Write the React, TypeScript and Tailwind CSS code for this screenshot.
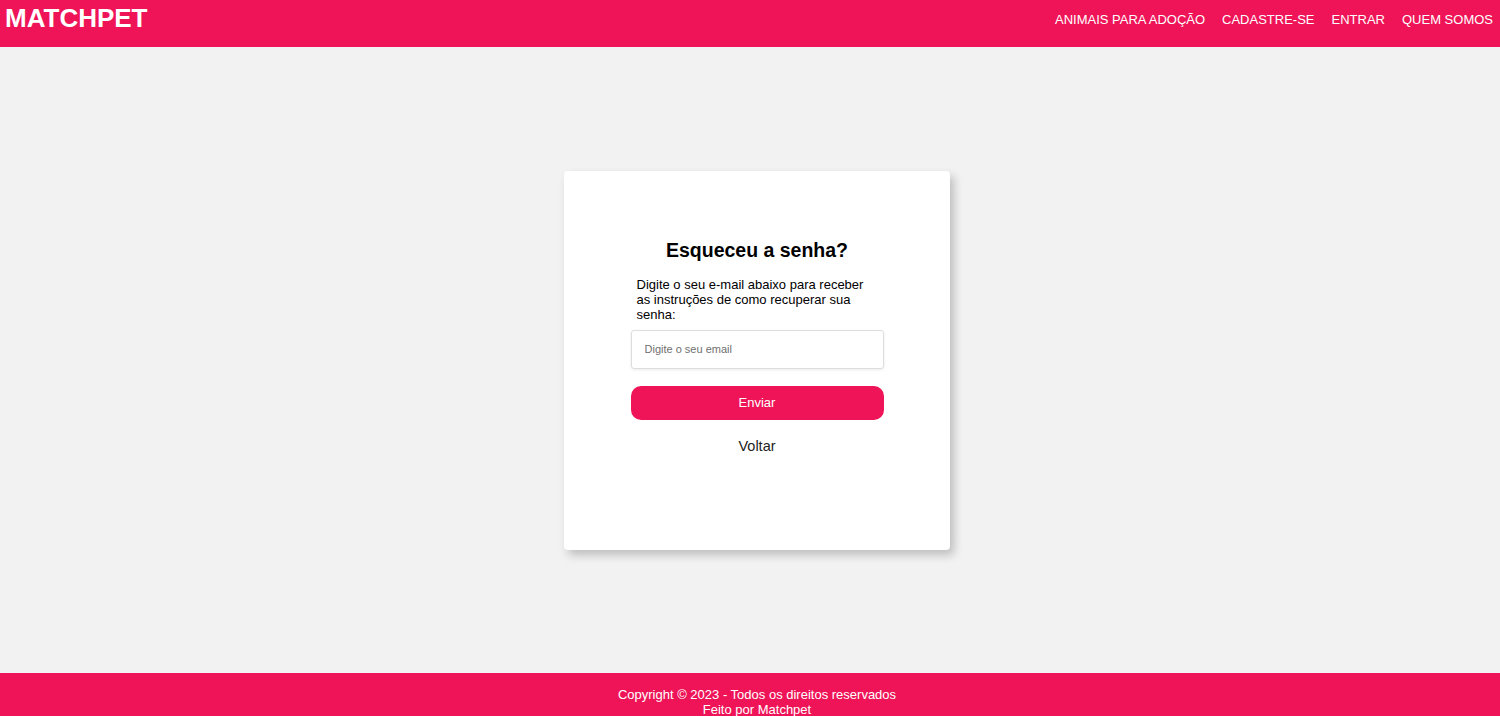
import React, { useState } from "react";

const links = ["ANIMAIS PARA ADOÇÃO", "CADASTRE-SE", "ENTRAR", "QUEM SOMOS"];

const EsqueceuSenha = () => {
  const [email, setEmail] = useState("");

  return (
    <div className="min-h-screen flex flex-col bg-[#f2f2f2] font-['Liberation_Sans',Arial,sans-serif]">
      <header className="h-[47px] bg-[#ee1457] flex items-start justify-between pl-[5px] pr-[7px]">
        <h1 className="text-[26px] font-bold text-white leading-[30px] mt-[3px]">
          MATCHPET
        </h1>
        <nav className="flex gap-[17px] mt-[12px]">
          {links.map((l) => (
            <a key={l} href="#" className="text-white text-[13px] leading-4">
              {l}
            </a>
          ))}
        </nav>
      </header>

      <main className="h-[626px] flex items-center justify-center pl-[14px]">
        <div className="w-[386px] h-[379px] bg-white rounded-[4px] shadow-[4px_5px_10px_rgba(0,0,0,0.22)] pt-[68px] flex flex-col items-center">
          <div className="w-[253px] flex flex-col">
            <h2 className="text-[19.5px] font-bold text-black text-center leading-[23px]">
              Esqueceu a senha?
            </h2>
            <p className="mt-[15px] px-[6px] text-[13px] leading-[15px] text-black">
              Digite o seu e-mail abaixo para receber as instruções de como
              recuperar sua senha:
            </p>
            <input
              type="email"
              value={email}
              onChange={(e) => setEmail(e.target.value)}
              placeholder="Digite o seu email"
              className="mt-[8px] h-[39px] border border-[#dddddd] rounded-[3px] px-[13px] text-[11px] placeholder:text-[#6f6f6f] outline-none shadow-[0_1px_3px_rgba(0,0,0,0.08)]"
            />
            <button
              type="button"
              className="mt-[17px] h-[34px] bg-[#ee1457] text-white text-[13px] rounded-[10px]"
            >
              Enviar
            </button>
            <a
              href="#"
              className="mt-[17px] text-[14.5px] leading-[18px] text-[#222] text-center"
            >
              Voltar
            </a>
          </div>
        </div>
      </main>

      <footer className="bg-[#ee1457] pt-[14px] pb-[6px] pl-[14px] text-center text-white text-[13px] leading-[15px]">
        <p>Copyright © 2023 - Todos os direitos reservados</p>
        <p>Feito por Matchpet</p>
      </footer>
    </div>
  );
};

export default EsqueceuSenha;
